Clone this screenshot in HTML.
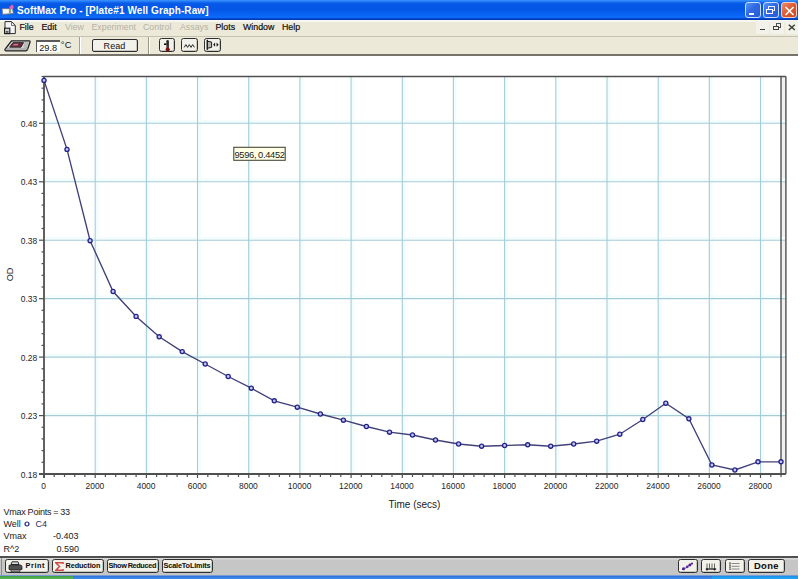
<!DOCTYPE html>
<html><head><meta charset="utf-8"><style>
html,body{margin:0;padding:0;width:800px;height:579px;overflow:hidden;background:#fff;}
body{position:relative;font-family:"Liberation Sans",sans-serif;}
.abs{position:absolute;}
#title{left:0;top:0;width:798px;height:20px;background:linear-gradient(to bottom,#3d95ff 0px,#1a70f0 2px,#065ae8 3.5px,#0456e4 9px,#0862f2 14px,#0c6cf8 17.5px,#0048d0 18.5px,#0036a8 20px);}
#title .t{position:absolute;left:17px;top:5px;color:#fff;font-weight:bold;font-size:10px;letter-spacing:0.09px;white-space:nowrap;}
#menubar{left:0;top:20px;width:798px;height:16px;background:linear-gradient(#f6f6f2 0px,#f6f6f2 1.5px,#ece9d8 2.5px);border-bottom:1px solid #c5c2b2;}
#menubar span{position:absolute;top:2.3px;font-size:8.8px;color:#101010;white-space:nowrap;-webkit-text-stroke:0.2px #101010;}
#menubar span.dis{color:#b5b2a5;-webkit-text-stroke:0;}
#toolbar{left:0;top:37px;width:798px;height:17px;background:#ece9d8;border-bottom:2px solid #76746a;}
#content{left:0;top:56px;width:798px;height:500px;background:#fff;}
#bottombar{left:0;top:556px;width:798px;height:19.5px;background:linear-gradient(#d8d8d8 0px,#d8d8d8 1.2px,#c6c6c6 2px);border-top:2px solid #505050;box-sizing:border-box;}
.btn{position:absolute;box-sizing:border-box;border:1.5px solid #2e2e2e;border-radius:2.5px;background:#f2f1ea;box-shadow:inset -1px -1px 0 #c8c8c0;font-size:8.5px;color:#101010;text-align:center;white-space:nowrap;}
.bt{font-size:7.3px;font-weight:bold;color:#101010;white-space:nowrap;-webkit-text-stroke:0.05px #101010;}
#taskbar{left:0;top:575px;width:798px;height:4px;background:linear-gradient(#c8d4e8 0px,#2a62c8 1px,#3a86e8 2px,#3a86e8 4px);}
#tray{left:712px;top:576px;width:86px;height:3px;background:linear-gradient(#1a80d8 0px,#20a0f2 1px);}
#start{left:0;top:576px;width:73px;height:3px;background:linear-gradient(#3a983a 0px,#52b052 1.5px);}
.info{position:absolute;font-size:9px;color:#202020;white-space:nowrap;}
</style></head><body>
<div id="title" class="abs">
  <svg class="abs" style="left:1px;top:4px" width="14" height="12" viewBox="0 0 14 12">
    <path d="M1,4.5 L11.5,4.5 L12.5,9.5 L1.5,10.5 Z" fill="#e8ece8" stroke="#5a6a90" stroke-width="0.8"/>
    <path d="M2,6 L7,6 L7,9 L2,9 Z" fill="#f4f8f0"/>
    <path d="M8,5 L10,5 L10,9.5 L8,9.5 Z" fill="#90a080"/>
    <circle cx="10.5" cy="3" r="2.2" fill="#e060c0"/>
    <path d="M8,1 L10,2" stroke="#404060" stroke-width="1"/>
  </svg>
  <div class="t">SoftMax Pro - [Plate#1 Well Graph-Raw]</div>
  <div class="abs" style="left:744.5px;top:1.5px;width:16.5px;height:16.5px;box-sizing:border-box;border:1px solid #c8dcff;border-radius:3px;background:linear-gradient(135deg,#5a94f4,#3068e4 45%,#2a5ad8);"><div class="abs" style="left:3px;top:10px;width:5.5px;height:2px;background:#fff"></div></div>
  <div class="abs" style="left:762.5px;top:1.5px;width:16.5px;height:16.5px;box-sizing:border-box;border:1px solid #c8dcff;border-radius:3px;background:linear-gradient(135deg,#5a94f4,#3068e4 45%,#2a5ad8);">
    <div class="abs" style="left:4.5px;top:3.5px;width:5px;height:3px;border:1px solid #e8f0ff;border-top-width:1.5px;"></div>
    <div class="abs" style="left:2.8px;top:6px;width:4.5px;height:3.5px;border:1px solid #fff;border-top-width:1.5px;background:#3068e4"></div>
  </div>
  <div class="abs" style="left:780.5px;top:1.5px;width:16.5px;height:16.5px;box-sizing:border-box;border:1px solid #f0d0c8;border-radius:3px;background:linear-gradient(135deg,#ec8a6a,#e05a30 50%,#cc4a22);">
    <svg class="abs" style="left:2px;top:3px" width="11" height="10"><path d="M1.5,1 L9.5,9 M9.5,1 L1.5,9" stroke="#fff" stroke-width="1.7"/></svg>
  </div>
</div>
<div id="menubar" class="abs">
  <svg class="abs" style="left:3.5px;top:1px" width="13" height="14" viewBox="0 0 13 14">
    <path d="M1,0.6 L7.5,0.6 L11.3,4.5 L11.3,12.6 L1,12.6 Z" fill="#f4f4f4" stroke="#2a2a2a" stroke-width="1"/>
    <path d="M7.5,0.6 L7.5,4.5 L11.3,4.5" fill="none" stroke="#6a6a6a" stroke-width="0.9"/>
    <rect x="0.6" y="7.2" width="5.2" height="5.4" fill="#d0d0d0" stroke="#1a1a1a" stroke-width="1.1"/>
    <rect x="1.8" y="10" width="2.6" height="1.8" fill="#5a5a5a"/>
  </svg>
  <span style="left:19.5px">File</span>
  <span style="left:41.5px">Edit</span>
  <span class="dis" style="left:65px">View</span>
  <span class="dis" style="left:91.5px">Experiment</span>
  <span class="dis" style="left:143px">Control</span>
  <span class="dis" style="left:180px">Assays</span>
  <span style="left:215.5px">Plots</span>
  <span style="left:243px">Window</span>
  <span style="left:282px">Help</span>
  <div class="abs" style="left:756px;top:1px;width:12.5px;height:12.5px;background:#f3f2ea"></div>
  <div class="abs" style="left:770px;top:1px;width:13.5px;height:12.5px;background:#f3f2ea"></div>
  <div class="abs" style="left:785px;top:1px;width:12.5px;height:12.5px;background:#f3f2ea"></div>
  <div class="abs" style="left:760px;top:8.9px;width:5px;height:1.6px;background:#3a3a3a"></div>
  <div class="abs" style="left:775.5px;top:3.3px;width:5px;height:5px;box-sizing:border-box;border:1px solid #505050;border-top-width:1.5px"></div>
  <div class="abs" style="left:773px;top:5.5px;width:5.8px;height:4.8px;box-sizing:border-box;border:1px solid #404040;border-top-width:1.5px;background:#f3f2ea"></div>
  <svg class="abs" style="left:787.5px;top:3.8px" width="8" height="7"><path d="M0.8,0.7 L6.8,6 M6.8,0.7 L0.8,6" stroke="#3a4236" stroke-width="1.5"/></svg>
</div>
<div id="toolbar" class="abs">
  <svg class="abs" style="left:4px;top:3px" width="27" height="12" viewBox="0 0 27 12">
    <path d="M7.5,0.8 L25.2,0.8 Q26.3,0.9 26,2 L23.5,9.6 Q23,10.8 21.8,10.8 L2.2,10.8 Q0.6,10.8 1,9.4 Z" fill="#d8d8d8" stroke="#1e1e1e" stroke-width="1.3"/>
    <path d="M1.5,9 L23.8,9" stroke="#8a8a8a" stroke-width="1"/>
    <path d="M9,2.6 L19.6,2.6 L17,7.2 L5.6,7.2 Z" fill="#6a2a40" stroke="#2a2a2a" stroke-width="0.9"/>
    <path d="M10,3.8 L14.5,3.8 L13.5,5.6 L8.6,5.6 Z" fill="#c07890"/>
    <path d="M20.5,3 L24,3 M20,5 L23.5,5 M19.5,7 L23,7" stroke="#9a9a9a" stroke-width="1"/>
  </svg>
  <div class="abs" style="left:36px;top:3px;width:24px;height:12px;box-sizing:border-box;background:#fff;border-top:2px solid #5a5a5a;border-left:1.6px solid #5a5a5a;"><span class="abs" style="left:2.2px;top:0.6px;font-size:9.2px;color:#151515">29.8</span></div>
  <span class="abs" style="left:60.8px;top:3.2px;font-size:9.2px;color:#151515;letter-spacing:0.3px">°C</span>
  <div class="abs" style="left:79px;top:0px;width:1px;height:17px;background:#a0a090;border-right:1px solid #fff"></div>
  <div class="btn" style="left:91.5px;top:2.2px;width:46px;height:13.2px;line-height:12.2px;font-size:9px;letter-spacing:0.1px;color:#151515;border-radius:2px">Read</div>
  <div class="abs" style="left:148px;top:0px;width:1px;height:17px;background:#9a988c;border-right:1px solid #fff"></div>
  <div class="btn" style="left:158.5px;top:0.6px;width:16.5px;height:14.6px;"></div>
  <svg class="abs" style="left:158.5px;top:0px" width="17" height="17" viewBox="0 0 17 17">
    <rect x="7.4" y="3" width="2.5" height="9" rx="1.2" fill="#2a2a2a"/>
    <rect x="8.1" y="8" width="1.1" height="4" fill="#901c1c"/>
    <circle cx="8.7" cy="12.6" r="2.1" fill="#7a1414"/>
    <path d="M5,7.2 L7.5,7.2" stroke="#101010" stroke-width="1.6"/>
  </svg>
  <div class="btn" style="left:181px;top:0.6px;width:17px;height:14.6px;"></div>
  <svg class="abs" style="left:181px;top:0px" width="17" height="17" viewBox="0 0 17 17">
    <path d="M3.2,10.4 L4.9,7.6 L6.6,10.4 L8.3,7.6 L10,10.4 L11.7,7.6 L13.4,10.4" fill="none" stroke="#2a2a2a" stroke-width="1"/>
  </svg>
  <div class="btn" style="left:203.5px;top:0.6px;width:17px;height:14.6px;"></div>
  <svg class="abs" style="left:203.5px;top:0px" width="17" height="17" viewBox="0 0 17 17">
    <path d="M3.3,2.8 L3.3,12.8" stroke="#101010" stroke-width="1.5"/>
    <path d="M3.5,4.3 L7.6,5 L7.6,10.4 L3.5,11.2 Z" fill="#b8b8b0" stroke="#202020" stroke-width="1"/>
    <path d="M9.2,7.7 L11.1,5.6 L11.1,9.8 Z M14.6,7.7 L12.6,5.6 L12.6,9.8 Z" fill="#101010"/>
  </svg>
</div>
<div id="content" class="abs"></div>
<svg class="abs" style="left:0;top:0" width="800" height="556">
<rect x="781.0" y="76.5" width="4.9" height="397.5" fill="#f0f0f0"/>
<rect x="95.7" y="76.5" width="3" height="397.5" fill="#f4fdfe"/>
<rect x="146.9" y="76.5" width="3" height="397.5" fill="#f4fdfe"/>
<rect x="198.0" y="76.5" width="3" height="397.5" fill="#f4fdfe"/>
<rect x="249.2" y="76.5" width="3" height="397.5" fill="#f4fdfe"/>
<rect x="300.4" y="76.5" width="3" height="397.5" fill="#f4fdfe"/>
<rect x="351.6" y="76.5" width="3" height="397.5" fill="#f4fdfe"/>
<rect x="402.8" y="76.5" width="3" height="397.5" fill="#f4fdfe"/>
<rect x="453.9" y="76.5" width="3" height="397.5" fill="#f4fdfe"/>
<rect x="505.1" y="76.5" width="3" height="397.5" fill="#f4fdfe"/>
<rect x="556.3" y="76.5" width="3" height="397.5" fill="#f4fdfe"/>
<rect x="607.5" y="76.5" width="3" height="397.5" fill="#f4fdfe"/>
<rect x="658.7" y="76.5" width="3" height="397.5" fill="#f4fdfe"/>
<rect x="709.8" y="76.5" width="3" height="397.5" fill="#f4fdfe"/>
<rect x="761.0" y="76.5" width="3" height="397.5" fill="#f4fdfe"/>
<rect x="44.0" y="412.1" width="741.9" height="3" fill="#f4fdfe"/>
<rect x="44.0" y="353.6" width="741.9" height="3" fill="#f4fdfe"/>
<rect x="44.0" y="295.1" width="741.9" height="3" fill="#f4fdfe"/>
<rect x="44.0" y="236.7" width="741.9" height="3" fill="#f4fdfe"/>
<rect x="44.0" y="178.2" width="741.9" height="3" fill="#f4fdfe"/>
<rect x="44.0" y="119.8" width="741.9" height="3" fill="#f4fdfe"/>
<line x1="95.2" y1="76.5" x2="95.2" y2="474.0" stroke="#a4ccd6" stroke-width="1.1"/>
<line x1="146.4" y1="76.5" x2="146.4" y2="474.0" stroke="#a4ccd6" stroke-width="1.1"/>
<line x1="197.5" y1="76.5" x2="197.5" y2="474.0" stroke="#a4ccd6" stroke-width="1.1"/>
<line x1="248.7" y1="76.5" x2="248.7" y2="474.0" stroke="#a4ccd6" stroke-width="1.1"/>
<line x1="299.9" y1="76.5" x2="299.9" y2="474.0" stroke="#a4ccd6" stroke-width="1.1"/>
<line x1="351.1" y1="76.5" x2="351.1" y2="474.0" stroke="#a4ccd6" stroke-width="1.1"/>
<line x1="402.3" y1="76.5" x2="402.3" y2="474.0" stroke="#a4ccd6" stroke-width="1.1"/>
<line x1="453.4" y1="76.5" x2="453.4" y2="474.0" stroke="#a4ccd6" stroke-width="1.1"/>
<line x1="504.6" y1="76.5" x2="504.6" y2="474.0" stroke="#a4ccd6" stroke-width="1.1"/>
<line x1="555.8" y1="76.5" x2="555.8" y2="474.0" stroke="#a4ccd6" stroke-width="1.1"/>
<line x1="607.0" y1="76.5" x2="607.0" y2="474.0" stroke="#a4ccd6" stroke-width="1.1"/>
<line x1="658.2" y1="76.5" x2="658.2" y2="474.0" stroke="#a4ccd6" stroke-width="1.1"/>
<line x1="709.3" y1="76.5" x2="709.3" y2="474.0" stroke="#a4ccd6" stroke-width="1.1"/>
<line x1="760.5" y1="76.5" x2="760.5" y2="474.0" stroke="#a4ccd6" stroke-width="1.1"/>
<line x1="44.0" y1="415.6" x2="785.9" y2="415.6" stroke="#a4ccd6" stroke-width="1.1"/>
<line x1="44.0" y1="357.1" x2="785.9" y2="357.1" stroke="#a4ccd6" stroke-width="1.1"/>
<line x1="44.0" y1="298.6" x2="785.9" y2="298.6" stroke="#a4ccd6" stroke-width="1.1"/>
<line x1="44.0" y1="240.2" x2="785.9" y2="240.2" stroke="#a4ccd6" stroke-width="1.1"/>
<line x1="44.0" y1="181.8" x2="785.9" y2="181.8" stroke="#a4ccd6" stroke-width="1.1"/>
<line x1="44.0" y1="123.3" x2="785.9" y2="123.3" stroke="#a4ccd6" stroke-width="1.1"/>
<line x1="44.0" y1="76.5" x2="785.9" y2="76.5" stroke="#505050" stroke-width="1.6"/>
<line x1="785.9" y1="76.5" x2="785.9" y2="474.0" stroke="#505050" stroke-width="1.4"/>
<line x1="781.0" y1="76.5" x2="781.0" y2="474.0" stroke="#505050" stroke-width="1.4"/>
<line x1="44.0" y1="76.5" x2="44.0" y2="478.0" stroke="#505050" stroke-width="1.8"/>
<line x1="39.0" y1="474.0" x2="785.9" y2="474.0" stroke="#505050" stroke-width="1.8"/>
<line x1="44.0" y1="474.0" x2="44.0" y2="478.0" stroke="#505050" stroke-width="1.2"/>
<line x1="54.2" y1="474.0" x2="54.2" y2="477.0" stroke="#505050" stroke-width="1.2"/>
<line x1="64.5" y1="474.0" x2="64.5" y2="477.0" stroke="#505050" stroke-width="1.2"/>
<line x1="74.7" y1="474.0" x2="74.7" y2="477.0" stroke="#505050" stroke-width="1.2"/>
<line x1="84.9" y1="474.0" x2="84.9" y2="477.0" stroke="#505050" stroke-width="1.2"/>
<line x1="95.2" y1="474.0" x2="95.2" y2="478.0" stroke="#505050" stroke-width="1.2"/>
<line x1="105.4" y1="474.0" x2="105.4" y2="477.0" stroke="#505050" stroke-width="1.2"/>
<line x1="115.7" y1="474.0" x2="115.7" y2="477.0" stroke="#505050" stroke-width="1.2"/>
<line x1="125.9" y1="474.0" x2="125.9" y2="477.0" stroke="#505050" stroke-width="1.2"/>
<line x1="136.1" y1="474.0" x2="136.1" y2="477.0" stroke="#505050" stroke-width="1.2"/>
<line x1="146.4" y1="474.0" x2="146.4" y2="478.0" stroke="#505050" stroke-width="1.2"/>
<line x1="156.6" y1="474.0" x2="156.6" y2="477.0" stroke="#505050" stroke-width="1.2"/>
<line x1="166.8" y1="474.0" x2="166.8" y2="477.0" stroke="#505050" stroke-width="1.2"/>
<line x1="177.1" y1="474.0" x2="177.1" y2="477.0" stroke="#505050" stroke-width="1.2"/>
<line x1="187.3" y1="474.0" x2="187.3" y2="477.0" stroke="#505050" stroke-width="1.2"/>
<line x1="197.5" y1="474.0" x2="197.5" y2="478.0" stroke="#505050" stroke-width="1.2"/>
<line x1="207.8" y1="474.0" x2="207.8" y2="477.0" stroke="#505050" stroke-width="1.2"/>
<line x1="218.0" y1="474.0" x2="218.0" y2="477.0" stroke="#505050" stroke-width="1.2"/>
<line x1="228.2" y1="474.0" x2="228.2" y2="477.0" stroke="#505050" stroke-width="1.2"/>
<line x1="238.5" y1="474.0" x2="238.5" y2="477.0" stroke="#505050" stroke-width="1.2"/>
<line x1="248.7" y1="474.0" x2="248.7" y2="478.0" stroke="#505050" stroke-width="1.2"/>
<line x1="259.0" y1="474.0" x2="259.0" y2="477.0" stroke="#505050" stroke-width="1.2"/>
<line x1="269.2" y1="474.0" x2="269.2" y2="477.0" stroke="#505050" stroke-width="1.2"/>
<line x1="279.4" y1="474.0" x2="279.4" y2="477.0" stroke="#505050" stroke-width="1.2"/>
<line x1="289.7" y1="474.0" x2="289.7" y2="477.0" stroke="#505050" stroke-width="1.2"/>
<line x1="299.9" y1="474.0" x2="299.9" y2="478.0" stroke="#505050" stroke-width="1.2"/>
<line x1="310.1" y1="474.0" x2="310.1" y2="477.0" stroke="#505050" stroke-width="1.2"/>
<line x1="320.4" y1="474.0" x2="320.4" y2="477.0" stroke="#505050" stroke-width="1.2"/>
<line x1="330.6" y1="474.0" x2="330.6" y2="477.0" stroke="#505050" stroke-width="1.2"/>
<line x1="340.8" y1="474.0" x2="340.8" y2="477.0" stroke="#505050" stroke-width="1.2"/>
<line x1="351.1" y1="474.0" x2="351.1" y2="478.0" stroke="#505050" stroke-width="1.2"/>
<line x1="361.3" y1="474.0" x2="361.3" y2="477.0" stroke="#505050" stroke-width="1.2"/>
<line x1="371.6" y1="474.0" x2="371.6" y2="477.0" stroke="#505050" stroke-width="1.2"/>
<line x1="381.8" y1="474.0" x2="381.8" y2="477.0" stroke="#505050" stroke-width="1.2"/>
<line x1="392.0" y1="474.0" x2="392.0" y2="477.0" stroke="#505050" stroke-width="1.2"/>
<line x1="402.3" y1="474.0" x2="402.3" y2="478.0" stroke="#505050" stroke-width="1.2"/>
<line x1="412.5" y1="474.0" x2="412.5" y2="477.0" stroke="#505050" stroke-width="1.2"/>
<line x1="422.7" y1="474.0" x2="422.7" y2="477.0" stroke="#505050" stroke-width="1.2"/>
<line x1="433.0" y1="474.0" x2="433.0" y2="477.0" stroke="#505050" stroke-width="1.2"/>
<line x1="443.2" y1="474.0" x2="443.2" y2="477.0" stroke="#505050" stroke-width="1.2"/>
<line x1="453.4" y1="474.0" x2="453.4" y2="478.0" stroke="#505050" stroke-width="1.2"/>
<line x1="463.7" y1="474.0" x2="463.7" y2="477.0" stroke="#505050" stroke-width="1.2"/>
<line x1="473.9" y1="474.0" x2="473.9" y2="477.0" stroke="#505050" stroke-width="1.2"/>
<line x1="484.1" y1="474.0" x2="484.1" y2="477.0" stroke="#505050" stroke-width="1.2"/>
<line x1="494.4" y1="474.0" x2="494.4" y2="477.0" stroke="#505050" stroke-width="1.2"/>
<line x1="504.6" y1="474.0" x2="504.6" y2="478.0" stroke="#505050" stroke-width="1.2"/>
<line x1="514.9" y1="474.0" x2="514.9" y2="477.0" stroke="#505050" stroke-width="1.2"/>
<line x1="525.1" y1="474.0" x2="525.1" y2="477.0" stroke="#505050" stroke-width="1.2"/>
<line x1="535.3" y1="474.0" x2="535.3" y2="477.0" stroke="#505050" stroke-width="1.2"/>
<line x1="545.6" y1="474.0" x2="545.6" y2="477.0" stroke="#505050" stroke-width="1.2"/>
<line x1="555.8" y1="474.0" x2="555.8" y2="478.0" stroke="#505050" stroke-width="1.2"/>
<line x1="566.0" y1="474.0" x2="566.0" y2="477.0" stroke="#505050" stroke-width="1.2"/>
<line x1="576.3" y1="474.0" x2="576.3" y2="477.0" stroke="#505050" stroke-width="1.2"/>
<line x1="586.5" y1="474.0" x2="586.5" y2="477.0" stroke="#505050" stroke-width="1.2"/>
<line x1="596.7" y1="474.0" x2="596.7" y2="477.0" stroke="#505050" stroke-width="1.2"/>
<line x1="607.0" y1="474.0" x2="607.0" y2="478.0" stroke="#505050" stroke-width="1.2"/>
<line x1="617.2" y1="474.0" x2="617.2" y2="477.0" stroke="#505050" stroke-width="1.2"/>
<line x1="627.5" y1="474.0" x2="627.5" y2="477.0" stroke="#505050" stroke-width="1.2"/>
<line x1="637.7" y1="474.0" x2="637.7" y2="477.0" stroke="#505050" stroke-width="1.2"/>
<line x1="647.9" y1="474.0" x2="647.9" y2="477.0" stroke="#505050" stroke-width="1.2"/>
<line x1="658.2" y1="474.0" x2="658.2" y2="478.0" stroke="#505050" stroke-width="1.2"/>
<line x1="668.4" y1="474.0" x2="668.4" y2="477.0" stroke="#505050" stroke-width="1.2"/>
<line x1="678.6" y1="474.0" x2="678.6" y2="477.0" stroke="#505050" stroke-width="1.2"/>
<line x1="688.9" y1="474.0" x2="688.9" y2="477.0" stroke="#505050" stroke-width="1.2"/>
<line x1="699.1" y1="474.0" x2="699.1" y2="477.0" stroke="#505050" stroke-width="1.2"/>
<line x1="709.3" y1="474.0" x2="709.3" y2="478.0" stroke="#505050" stroke-width="1.2"/>
<line x1="719.6" y1="474.0" x2="719.6" y2="477.0" stroke="#505050" stroke-width="1.2"/>
<line x1="729.8" y1="474.0" x2="729.8" y2="477.0" stroke="#505050" stroke-width="1.2"/>
<line x1="740.0" y1="474.0" x2="740.0" y2="477.0" stroke="#505050" stroke-width="1.2"/>
<line x1="750.3" y1="474.0" x2="750.3" y2="477.0" stroke="#505050" stroke-width="1.2"/>
<line x1="760.5" y1="474.0" x2="760.5" y2="478.0" stroke="#505050" stroke-width="1.2"/>
<line x1="770.8" y1="474.0" x2="770.8" y2="477.0" stroke="#505050" stroke-width="1.2"/>
<line x1="781.0" y1="474.0" x2="781.0" y2="477.0" stroke="#505050" stroke-width="1.2"/>
<line x1="39.0" y1="474.0" x2="44.0" y2="474.0" stroke="#505050" stroke-width="1.2"/>
<line x1="41.5" y1="462.3" x2="44.0" y2="462.3" stroke="#505050" stroke-width="1.2"/>
<line x1="41.5" y1="450.6" x2="44.0" y2="450.6" stroke="#505050" stroke-width="1.2"/>
<line x1="41.5" y1="438.9" x2="44.0" y2="438.9" stroke="#505050" stroke-width="1.2"/>
<line x1="41.5" y1="427.2" x2="44.0" y2="427.2" stroke="#505050" stroke-width="1.2"/>
<line x1="39.0" y1="415.6" x2="44.0" y2="415.6" stroke="#505050" stroke-width="1.2"/>
<line x1="41.5" y1="403.9" x2="44.0" y2="403.9" stroke="#505050" stroke-width="1.2"/>
<line x1="41.5" y1="392.2" x2="44.0" y2="392.2" stroke="#505050" stroke-width="1.2"/>
<line x1="41.5" y1="380.5" x2="44.0" y2="380.5" stroke="#505050" stroke-width="1.2"/>
<line x1="41.5" y1="368.8" x2="44.0" y2="368.8" stroke="#505050" stroke-width="1.2"/>
<line x1="39.0" y1="357.1" x2="44.0" y2="357.1" stroke="#505050" stroke-width="1.2"/>
<line x1="41.5" y1="345.4" x2="44.0" y2="345.4" stroke="#505050" stroke-width="1.2"/>
<line x1="41.5" y1="333.7" x2="44.0" y2="333.7" stroke="#505050" stroke-width="1.2"/>
<line x1="41.5" y1="322.0" x2="44.0" y2="322.0" stroke="#505050" stroke-width="1.2"/>
<line x1="41.5" y1="310.3" x2="44.0" y2="310.3" stroke="#505050" stroke-width="1.2"/>
<line x1="39.0" y1="298.7" x2="44.0" y2="298.7" stroke="#505050" stroke-width="1.2"/>
<line x1="41.5" y1="287.0" x2="44.0" y2="287.0" stroke="#505050" stroke-width="1.2"/>
<line x1="41.5" y1="275.3" x2="44.0" y2="275.3" stroke="#505050" stroke-width="1.2"/>
<line x1="41.5" y1="263.6" x2="44.0" y2="263.6" stroke="#505050" stroke-width="1.2"/>
<line x1="41.5" y1="251.9" x2="44.0" y2="251.9" stroke="#505050" stroke-width="1.2"/>
<line x1="39.0" y1="240.2" x2="44.0" y2="240.2" stroke="#505050" stroke-width="1.2"/>
<line x1="41.5" y1="228.5" x2="44.0" y2="228.5" stroke="#505050" stroke-width="1.2"/>
<line x1="41.5" y1="216.8" x2="44.0" y2="216.8" stroke="#505050" stroke-width="1.2"/>
<line x1="41.5" y1="205.1" x2="44.0" y2="205.1" stroke="#505050" stroke-width="1.2"/>
<line x1="41.5" y1="193.4" x2="44.0" y2="193.4" stroke="#505050" stroke-width="1.2"/>
<line x1="39.0" y1="181.8" x2="44.0" y2="181.8" stroke="#505050" stroke-width="1.2"/>
<line x1="41.5" y1="170.1" x2="44.0" y2="170.1" stroke="#505050" stroke-width="1.2"/>
<line x1="41.5" y1="158.4" x2="44.0" y2="158.4" stroke="#505050" stroke-width="1.2"/>
<line x1="41.5" y1="146.7" x2="44.0" y2="146.7" stroke="#505050" stroke-width="1.2"/>
<line x1="41.5" y1="135.0" x2="44.0" y2="135.0" stroke="#505050" stroke-width="1.2"/>
<line x1="39.0" y1="123.3" x2="44.0" y2="123.3" stroke="#505050" stroke-width="1.2"/>
<line x1="41.5" y1="111.6" x2="44.0" y2="111.6" stroke="#505050" stroke-width="1.2"/>
<line x1="41.5" y1="99.9" x2="44.0" y2="99.9" stroke="#505050" stroke-width="1.2"/>
<line x1="41.5" y1="88.2" x2="44.0" y2="88.2" stroke="#505050" stroke-width="1.2"/>
<line x1="41.5" y1="76.5" x2="44.0" y2="76.5" stroke="#505050" stroke-width="1.2"/>
<text transform="translate(43.7,488.8) scale(0.88,1)" text-anchor="middle" font-family="Liberation Sans" font-size="9.6" fill="#1e1e1e">0</text>
<text transform="translate(94.9,488.8) scale(0.88,1)" text-anchor="middle" font-family="Liberation Sans" font-size="9.6" fill="#1e1e1e">2000</text>
<text transform="translate(146.1,488.8) scale(0.88,1)" text-anchor="middle" font-family="Liberation Sans" font-size="9.6" fill="#1e1e1e">4000</text>
<text transform="translate(197.2,488.8) scale(0.88,1)" text-anchor="middle" font-family="Liberation Sans" font-size="9.6" fill="#1e1e1e">6000</text>
<text transform="translate(248.4,488.8) scale(0.88,1)" text-anchor="middle" font-family="Liberation Sans" font-size="9.6" fill="#1e1e1e">8000</text>
<text transform="translate(299.6,488.8) scale(0.88,1)" text-anchor="middle" font-family="Liberation Sans" font-size="9.6" fill="#1e1e1e">10000</text>
<text transform="translate(350.8,488.8) scale(0.88,1)" text-anchor="middle" font-family="Liberation Sans" font-size="9.6" fill="#1e1e1e">12000</text>
<text transform="translate(402.0,488.8) scale(0.88,1)" text-anchor="middle" font-family="Liberation Sans" font-size="9.6" fill="#1e1e1e">14000</text>
<text transform="translate(453.1,488.8) scale(0.88,1)" text-anchor="middle" font-family="Liberation Sans" font-size="9.6" fill="#1e1e1e">16000</text>
<text transform="translate(504.3,488.8) scale(0.88,1)" text-anchor="middle" font-family="Liberation Sans" font-size="9.6" fill="#1e1e1e">18000</text>
<text transform="translate(555.5,488.8) scale(0.88,1)" text-anchor="middle" font-family="Liberation Sans" font-size="9.6" fill="#1e1e1e">20000</text>
<text transform="translate(606.7,488.8) scale(0.88,1)" text-anchor="middle" font-family="Liberation Sans" font-size="9.6" fill="#1e1e1e">22000</text>
<text transform="translate(657.9,488.8) scale(0.88,1)" text-anchor="middle" font-family="Liberation Sans" font-size="9.6" fill="#1e1e1e">24000</text>
<text transform="translate(709.0,488.8) scale(0.88,1)" text-anchor="middle" font-family="Liberation Sans" font-size="9.6" fill="#1e1e1e">26000</text>
<text transform="translate(760.2,488.8) scale(0.88,1)" text-anchor="middle" font-family="Liberation Sans" font-size="9.6" fill="#1e1e1e">28000</text>
<text transform="translate(37.2,477.6) scale(0.88,1)" text-anchor="end" font-family="Liberation Sans" font-size="9.6" fill="#1e1e1e">0.18</text>
<text transform="translate(37.2,419.2) scale(0.88,1)" text-anchor="end" font-family="Liberation Sans" font-size="9.6" fill="#1e1e1e">0.23</text>
<text transform="translate(37.2,360.7) scale(0.88,1)" text-anchor="end" font-family="Liberation Sans" font-size="9.6" fill="#1e1e1e">0.28</text>
<text transform="translate(37.2,302.2) scale(0.88,1)" text-anchor="end" font-family="Liberation Sans" font-size="9.6" fill="#1e1e1e">0.33</text>
<text transform="translate(37.2,243.8) scale(0.88,1)" text-anchor="end" font-family="Liberation Sans" font-size="9.6" fill="#1e1e1e">0.38</text>
<text transform="translate(37.2,185.3) scale(0.88,1)" text-anchor="end" font-family="Liberation Sans" font-size="9.6" fill="#1e1e1e">0.43</text>
<text transform="translate(37.2,126.9) scale(0.88,1)" text-anchor="end" font-family="Liberation Sans" font-size="9.6" fill="#1e1e1e">0.48</text>
<text x="414.5" y="507.5" text-anchor="middle" font-family="Liberation Sans" font-size="10" fill="#202020">Time (secs)</text>
<text transform="translate(13.4,274.4) rotate(-90)" text-anchor="middle" font-family="Liberation Sans" font-size="9.2" fill="#1e1e1e">OD</text>
<path d="M44.0,80.4 L67.0,149.4 L90.1,240.7 L113.1,291.5 L136.1,316.4 L159.2,336.8 L182.2,351.6 L205.2,364.0 L228.2,376.5 L251.3,388.2 L274.3,400.8 L297.3,407.2 L320.4,414.0 L343.4,420.2 L366.4,426.5 L389.5,432.2 L412.5,435.0 L435.5,440.0 L458.6,444.0 L481.6,446.2 L504.6,445.5 L527.7,444.8 L550.7,446.2 L573.7,444.0 L596.7,441.2 L619.8,434.2 L642.8,419.5 L665.8,403.2 L688.9,418.8 L711.9,465.0 L734.9,470.0 L758.0,461.8 L781.0,461.8" fill="none" stroke="#40407a" stroke-width="1.35"/>
<circle cx="44.0" cy="80.4" r="2.05" fill="#c4c4ea" stroke="#22228a" stroke-width="1.3"/>
<circle cx="67.0" cy="149.4" r="2.05" fill="#c4c4ea" stroke="#22228a" stroke-width="1.3"/>
<circle cx="90.1" cy="240.7" r="2.05" fill="#c4c4ea" stroke="#22228a" stroke-width="1.3"/>
<circle cx="113.1" cy="291.5" r="2.05" fill="#c4c4ea" stroke="#22228a" stroke-width="1.3"/>
<circle cx="136.1" cy="316.4" r="2.05" fill="#c4c4ea" stroke="#22228a" stroke-width="1.3"/>
<circle cx="159.2" cy="336.8" r="2.05" fill="#c4c4ea" stroke="#22228a" stroke-width="1.3"/>
<circle cx="182.2" cy="351.6" r="2.05" fill="#c4c4ea" stroke="#22228a" stroke-width="1.3"/>
<circle cx="205.2" cy="364.0" r="2.05" fill="#c4c4ea" stroke="#22228a" stroke-width="1.3"/>
<circle cx="228.2" cy="376.5" r="2.05" fill="#c4c4ea" stroke="#22228a" stroke-width="1.3"/>
<circle cx="251.3" cy="388.2" r="2.05" fill="#c4c4ea" stroke="#22228a" stroke-width="1.3"/>
<circle cx="274.3" cy="400.8" r="2.05" fill="#c4c4ea" stroke="#22228a" stroke-width="1.3"/>
<circle cx="297.3" cy="407.2" r="2.05" fill="#c4c4ea" stroke="#22228a" stroke-width="1.3"/>
<circle cx="320.4" cy="414.0" r="2.05" fill="#c4c4ea" stroke="#22228a" stroke-width="1.3"/>
<circle cx="343.4" cy="420.2" r="2.05" fill="#c4c4ea" stroke="#22228a" stroke-width="1.3"/>
<circle cx="366.4" cy="426.5" r="2.05" fill="#c4c4ea" stroke="#22228a" stroke-width="1.3"/>
<circle cx="389.5" cy="432.2" r="2.05" fill="#c4c4ea" stroke="#22228a" stroke-width="1.3"/>
<circle cx="412.5" cy="435.0" r="2.05" fill="#c4c4ea" stroke="#22228a" stroke-width="1.3"/>
<circle cx="435.5" cy="440.0" r="2.05" fill="#c4c4ea" stroke="#22228a" stroke-width="1.3"/>
<circle cx="458.6" cy="444.0" r="2.05" fill="#c4c4ea" stroke="#22228a" stroke-width="1.3"/>
<circle cx="481.6" cy="446.2" r="2.05" fill="#c4c4ea" stroke="#22228a" stroke-width="1.3"/>
<circle cx="504.6" cy="445.5" r="2.05" fill="#c4c4ea" stroke="#22228a" stroke-width="1.3"/>
<circle cx="527.7" cy="444.8" r="2.05" fill="#c4c4ea" stroke="#22228a" stroke-width="1.3"/>
<circle cx="550.7" cy="446.2" r="2.05" fill="#c4c4ea" stroke="#22228a" stroke-width="1.3"/>
<circle cx="573.7" cy="444.0" r="2.05" fill="#c4c4ea" stroke="#22228a" stroke-width="1.3"/>
<circle cx="596.7" cy="441.2" r="2.05" fill="#c4c4ea" stroke="#22228a" stroke-width="1.3"/>
<circle cx="619.8" cy="434.2" r="2.05" fill="#c4c4ea" stroke="#22228a" stroke-width="1.3"/>
<circle cx="642.8" cy="419.5" r="2.05" fill="#c4c4ea" stroke="#22228a" stroke-width="1.3"/>
<circle cx="665.8" cy="403.2" r="2.05" fill="#c4c4ea" stroke="#22228a" stroke-width="1.3"/>
<circle cx="688.9" cy="418.8" r="2.05" fill="#c4c4ea" stroke="#22228a" stroke-width="1.3"/>
<circle cx="711.9" cy="465.0" r="2.05" fill="#c4c4ea" stroke="#22228a" stroke-width="1.3"/>
<circle cx="734.9" cy="470.0" r="2.05" fill="#c4c4ea" stroke="#22228a" stroke-width="1.3"/>
<circle cx="758.0" cy="461.8" r="2.05" fill="#c4c4ea" stroke="#22228a" stroke-width="1.3"/>
<circle cx="781.0" cy="461.8" r="2.05" fill="#c4c4ea" stroke="#22228a" stroke-width="1.3"/>
<rect x="233.8" y="147.3" width="51.4" height="13" fill="#ffffe6" stroke="#4a4a3a" stroke-width="1.1"/>
<text x="259.6" y="157.6" text-anchor="middle" font-family="Liberation Sans" font-size="9.3" fill="#1a1a1a" letter-spacing="-0.28" word-spacing="-0.6">9596, 0.4452</text>
</svg>
<div class="info" style="left:3.5px;top:507px;letter-spacing:-0.22px;word-spacing:-0.3px">Vmax Points = 33</div>
<div class="info" style="left:3.5px;top:519px">Well</div>
<svg class="abs" style="left:24px;top:521px" width="6" height="6"><circle cx="3" cy="3" r="2" fill="none" stroke="#1c1c80" stroke-width="1.2"/></svg>
<div class="info" style="left:35.5px;top:519px;color:#2a2a68">C4</div>
<div class="info" style="left:3.5px;top:531px">Vmax</div>
<div class="info" style="left:53px;top:531px">-0.403</div>
<div class="info" style="left:3.5px;top:543.5px">R^2</div>
<div class="info" style="left:56.5px;top:543.5px">0.590</div>
<div id="bottombar" class="abs">
  <div class="abs" style="left:1px;top:0;width:1px;height:17.5px;background:#8c8c8c"></div>
  <div class="btn" style="left:5px;top:1.2px;width:44px;height:14px;"></div>
  <svg class="abs" style="left:8px;top:3.2px" width="15" height="12" viewBox="0 0 15 12">
    <path d="M4,0.8 L10,0.8 L11,3.5 L3,3.5 Z" fill="#d8d8d8" stroke="#303030" stroke-width="1"/>
    <path d="M1.5,4 L12.5,4 Q14,4 14,6 L14,8.5 L1,8.5 L1,6 Q1,4 1.5,4 Z" fill="#505050" stroke="#202020" stroke-width="0.8"/>
    <path d="M2.5,8.5 L12.5,8.5 L11.5,11 L3.5,11 Z" fill="#909090" stroke="#303030" stroke-width="0.8"/>
  </svg>
  <span class="abs bt" style="left:25.5px;top:2.8px;letter-spacing:0.6px">Print</span>
  <div class="btn" style="left:52px;top:1.2px;width:51.5px;height:14px;"></div>
  <svg class="abs" style="left:55px;top:4px" width="9" height="9" viewBox="0 0 9 9"><path d="M8,2 L8,0.8 L0.8,0.8 L4.5,4.5 L0.8,8.2 L8,8.2 L8,7" fill="none" stroke="#d04848" stroke-width="1.5"/></svg>
  <span class="abs bt" style="left:65.5px;top:2.8px;letter-spacing:-0.1px">Reduction</span>
  <div class="btn" style="left:106.5px;top:1.2px;width:52px;height:14px;"></div>
  <span class="abs bt" style="left:108.5px;top:2.8px;letter-spacing:-0.35px;word-spacing:-0.6px">Show Reduced</span>
  <div class="btn" style="left:161.5px;top:1.2px;width:51px;height:14px;"></div>
  <span class="abs bt" style="left:163.5px;top:2.8px;letter-spacing:-0.15px">ScaleToLimits</span>
  <div class="btn" style="left:677.5px;top:1.2px;width:20px;height:14px;"></div>
  <svg class="abs" style="left:681px;top:3.6px" width="13" height="9" viewBox="0 0 13 9"><path d="M1.2,7.4 L4,6.2 L7,4.2 L11,1.5" fill="none" stroke="#6a3ab0" stroke-width="1.3" stroke-dasharray="1.6,0.6"/><circle cx="2.5" cy="6.8" r="1.5" fill="#4a2090"/><circle cx="6.2" cy="4.9" r="1.3" fill="#5a30a0"/><circle cx="9" cy="3" r="1.4" fill="#4a2090"/><circle cx="11" cy="1.6" r="1.1" fill="#5a30a0"/></svg>
  <div class="btn" style="left:701px;top:1.2px;width:19.5px;height:14px;"></div>
  <svg class="abs" style="left:705px;top:3.5px" width="12" height="9" viewBox="0 0 12 9"><path d="M2,1.5 L2,6.5 M4.5,1.5 L4.5,6.5 M7,1.5 L7,6.5 M9.5,1.5 L9.5,6.5" stroke="#404040" stroke-width="0.8"/><path d="M0.8,7 L11.2,7" stroke="#101010" stroke-width="1.2"/><circle cx="2" cy="7.5" r="0.9" fill="#101010"/><circle cx="9.5" cy="7.5" r="0.9" fill="#101010"/></svg>
  <div class="btn" style="left:724.5px;top:1.2px;width:20px;height:14px;"></div>
  <svg class="abs" style="left:728px;top:3.6px" width="13" height="9" viewBox="0 0 13 9"><path d="M2,0.5 L2,8" stroke="#202020" stroke-width="1.4" stroke-dasharray="1.2,0.8"/><path d="M3.5,1.5 L11.5,1.5 M3.5,4.3 L11.5,4.3 M3.5,7 L11.5,7" stroke="#8a8a8a" stroke-width="1"/></svg>
  <div class="btn" style="left:748px;top:1.2px;width:36.5px;height:14px;"></div>
  <span class="abs bt" style="left:754px;top:1.9px;font-size:9.4px;letter-spacing:0.35px">Done</span>
</div>
<div id="taskbar" class="abs"></div>
<div id="tray" class="abs"></div>
<div id="start" class="abs"></div>
</body></html>
